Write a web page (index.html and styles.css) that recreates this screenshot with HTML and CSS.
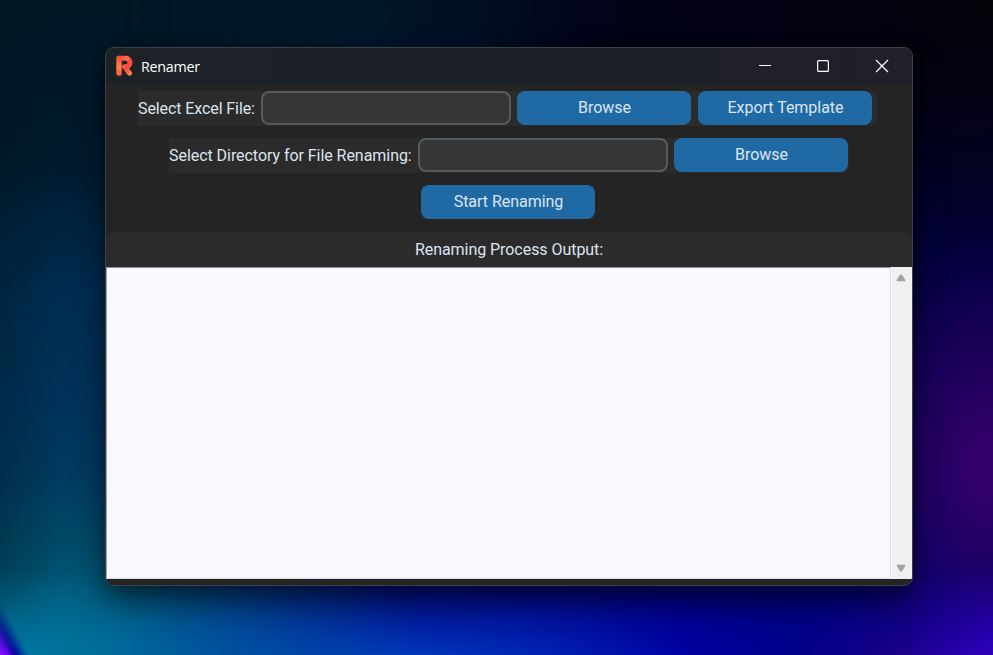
FILE: index.html
```html
<!DOCTYPE html>
<html lang="en">
<head>
<meta charset="utf-8">
<title>Renamer</title>
<link rel="stylesheet" href="styles.css">
</head>
<body>
<main class="window">
  <header class="titlebar">
    <svg class="logo" width="18" height="22" viewBox="0 0 18 22">
      <defs>
        <linearGradient id="warm" x1="0" y1="0" x2="1" y2="1">
          <stop offset="0" stop-color="#ff4b3e"/>
          <stop offset=".4" stop-color="#ff7044"/>
          <stop offset=".6" stop-color="#fb4240"/>
          <stop offset="1" stop-color="#ff7a45"/>
        </linearGradient>
        <linearGradient id="stem" x1="0" y1="0" x2="0" y2="1">
          <stop offset="0" stop-color="#ff4440"/>
          <stop offset=".55" stop-color="#ff8145"/>
          <stop offset="1" stop-color="#ff5a40"/>
        </linearGradient>
      </defs>
      <path d="M4.5 3.3H10.8a4 4 0 0 1 0 8.4H9.6L14.5 18.2" fill="none" stroke="url(#warm)" stroke-width="5" stroke-linecap="round" stroke-linejoin="round"/>
      <rect x="1.3" y=".8" width="5.4" height="20" rx="2" fill="url(#stem)"/>
    </svg>
    <h1 class="title">Renamer</h1>
    <nav class="controls">
      <svg width="14" height="14" viewBox="0 0 14 14"><path d="M1 6.5H13"/></svg>
      <svg width="14" height="14" viewBox="0 0 14 14"><rect x="1.6" y="1.6" width="10.8" height="10.8" rx="1"/></svg>
      <svg width="14" height="14" viewBox="0 0 14 14"><path d="M1 1L13 13M13 1L1 13"/></svg>
    </nav>
  </header>
  <section class="form">
    <div class="row row-file">
      <label class="label label-file" for="file">Select Excel File:</label>
      <input class="entry" id="file" type="text">
      <button class="button">Browse</button>
      <button class="button">Export Template</button>
    </div>
    <div class="row row-directory">
      <label class="label label-directory" for="directory">Select Directory for File Renaming:</label>
      <input class="entry" id="directory" type="text">
      <button class="button">Browse</button>
    </div>
    <button class="button start">Start Renaming</button>
  </section>
  <section class="output">
    <h2 class="heading">Renaming Process Output:</h2>
    <div class="log">
      <div class="text"></div>
      <div class="scrollbar">
        <svg width="10" height="8" viewBox="0 0 10 8"><path d="M4 .8Q5 0 6 .8L9.3 6V7.3H.7V6Z"/></svg>
        <svg width="10" height="8" viewBox="0 0 10 8"><path d="M4 7.2Q5 8 6 7.2L9.3 2V.7H.7V2Z"/></svg>
      </div>
    </div>
  </section>
</main>
</body>
</html>
```
FILE: styles.css
```css
* { box-sizing: border-box; }

body {
  position: relative;
  z-index: 0;
  margin: 0;
  height: 655px;
  padding: 47px 80px 0 105px;
  overflow: hidden;
  font-family: Roboto, "Liberation Sans", sans-serif;
  background:
    radial-gradient(ellipse 150px 230px at 985px 465px, #36006a 0, #2e0066a0 45%, transparent 100%),
    radial-gradient(ellipse 480px 260px at 993px 0, #030308 0, #030310c0 45%, transparent 100%),
    linear-gradient(180deg, transparent 0 15%, #00003e 42%, #000058 75%, #00008c 100%),
    linear-gradient(90deg, #001622 0, #00182c 35%, #020118 65%, #03002c 100%);
}

/* Wallpaper: left edge and bottom edge glows */
body::before,
body::after {
  content: "";
  position: absolute;
  inset: 0;
  z-index: -1;
}

body::before {
  background:
    linear-gradient(90deg, #00161e50 0, transparent 60px),
    linear-gradient(180deg, #001622 0, #001a2e 25%, #002c50 45%, #00325a 60%, #003a60 73%, #004a68 83%, #005c7c 92%, #006c9c 100%);
  mask-image: linear-gradient(90deg, #000 0 120px, transparent 420px);
}

body::after {
  background:
    linear-gradient(to bottom left, transparent 50%, #0018a0 68%, #1c00b0 76%, #6000f0 85%, #8a10ff 100%) 0 100% / 29px 54px no-repeat,
    linear-gradient(90deg, #0076a0 0, #0076a0 30px, #00729a 70px, #005a98 180px, #0044a8 310px, #0036b8 420px, #0024b4 540px, #0000a0 690px, #000088 800px, #1c0088 900px, #3000c0 993px);
  mask-image: linear-gradient(180deg, transparent 570px, #000a 630px, #000 655px);
}

.window {
  width: 808px;
  height: 539px;
  display: flex;
  flex-direction: column;
  overflow: hidden;
  border: 1px solid #3b4248;
  border-radius: 9px;
  background: #242424;
  box-shadow: 0 16px 30px rgba(0, 0, 0, .5), 0 2px 14px rgba(0, 0, 0, .2);
}

.titlebar {
  height: 37px;
  flex: none;
  display: flex;
  align-items: center;
  padding: 0 23px 0 9px;
  background: linear-gradient(90deg, #1c2226, #1b2029 50%, #211f27);
}

.logo { flex: none; margin-top: -1px; }

.title {
  margin: 1px 0 0 8px;
  font: 400 14.3px/20px "Open Sans", "Noto Sans", sans-serif;
  letter-spacing: -.25px;
  color: #fff;
}

.controls {
  display: flex;
  gap: 44.5px;
  margin: -2px 0 0 auto;
}

.controls svg {
  fill: none;
  stroke: #fff;
  stroke-width: 1.2;
}

.controls svg:nth-child(2) { margin: 0 .5px 0 -.5px; }

.form {
  height: 147px;
  flex: none;
  padding-top: 6px;
}

.row {
  display: flex;
  height: 35px;
  margin-bottom: 12px;
  background: #2b2b2b;
  border-radius: 0 7px 7px 0;
}

.row-file { width: 740px; margin-left: 32px; }
.row-directory { width: 680px; margin-left: 63px; }

.label {
  flex: none;
  font-size: 16px;
  line-height: 35px;
  letter-spacing: -.05px;
  white-space: nowrap;
  color: #dce4ee;
}

.label-file { width: 123px; letter-spacing: -.09px; }
.label-directory { width: 249px; }

.entry {
  width: 250px;
  height: 34px;
  flex: none;
  margin: 0 6px 0 0;
  padding: 0 8px;
  border: 2px solid #565b5e;
  border-radius: 8px;
  background: #343638;
  color: #dce4ee;
}

.button {
  display: block;
  width: 174px;
  height: 34px;
  flex: none;
  padding: 0 0 1px 1px;
  border: 0;
  border-radius: 8px;
  background: #1f6aa5;
  color: #dce4ee;
  font: 400 16px/33px Roboto, "Liberation Sans", sans-serif;
  letter-spacing: -.03px;
}

.button + .button { margin-left: 7px; }
.start { margin-left: 315px; }

.output {
  height: 347px;
  display: flex;
  flex-direction: column;
  border-radius: 8px 8px 0 0;
  background: #2b2b2b;
}

.heading {
  height: 35px;
  margin: 0;
  font-size: 16px;
  font-weight: 400;
  line-height: 35px;
  letter-spacing: -.05px;
  text-align: center;
  color: #dce4ee;
}

.log {
  flex: 1;
  display: flex;
  background: #f0f0f0;
}

.text {
  flex: 1;
  border: 1px solid #a0a0a0;
  border-color: #909094 #dcdce4 #dcdce4 #a0a0a0;
  background: #f8f8ff;
}

.scrollbar {
  width: 21px;
  display: flex;
  flex-direction: column;
  align-items: center;
  justify-content: space-between;
  padding: 7px 2px 7px 0;
  border-left: 1px solid #fff;
}

.scrollbar svg { fill: #a3a3a3; }
```
